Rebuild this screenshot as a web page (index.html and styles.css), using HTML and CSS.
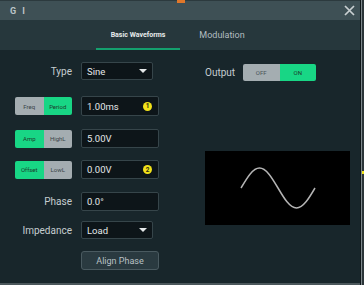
FILE: index.html
```html
<!DOCTYPE html>
<html>
<head>
<meta charset="utf-8">
<link rel="stylesheet" href="styles.css">
</head>
<body>
<div class="screen">
  <div class="dialog">
    <div class="titlebar">
      <span class="marker"></span>
      <span class="title">G I</span>
      <svg class="close" width="11" height="11" viewBox="0 0 11 11"><path d="M1 1L10 10M10 1L1 10" stroke="#c9d0d2" stroke-width="1.7" fill="none"/></svg>
    </div>
    <div class="tabs">
      <div class="tab active">Basic Waveforms</div>
      <div class="tab">Modulation</div>
    </div>
    <div class="content">
      <div class="left">
        <div class="row row-type">
          <span class="label">Type</span>
          <div class="select"><span>Sine</span><span class="caret"></span></div>
        </div>
        <div class="row row-freq">
          <div class="seg"><span class="seg-off">Freq</span><span class="seg-on">Period</span></div>
          <div class="input"><span>1.00ms</span><span class="badge">1</span></div>
        </div>
        <div class="row row-amp">
          <div class="seg"><span class="seg-on">Amp</span><span class="seg-off">HighL</span></div>
          <div class="input"><span>5.00V</span></div>
        </div>
        <div class="row row-offset">
          <div class="seg"><span class="seg-on">Offset</span><span class="seg-off">LowL</span></div>
          <div class="input"><span>0.00V</span><span class="badge">2</span></div>
        </div>
        <div class="row row-phase">
          <span class="label">Phase</span>
          <div class="input"><span>0.0°</span></div>
        </div>
        <div class="row row-imp">
          <span class="label">Impedance</span>
          <div class="select"><span>Load</span><span class="caret"></span></div>
        </div>
        <div class="row row-align">
          <span class="label"></span>
          <div class="button">Align Phase</div>
        </div>
      </div>
      <div class="right">
        <div class="output-row">
          <span class="out-label">Output</span>
          <div class="switch"><span class="sw-off">OFF</span><span class="sw-on">ON</span></div>
        </div>
        <div class="wave">
          <svg width="145" height="74" viewBox="0 0 145 74">
            <path d="M36 37 C42.03 26.75 47.8 17 54.5 17 C61.2 17 66.97 26.75 73 37 C79.03 47.25 84.8 57 91.5 57 C98.2 57 103.97 47.25 110 37" stroke="#b4b4b4" stroke-width="1.5" fill="none"/>
          </svg>
        </div>
      </div>
    </div>
    <div class="bottom-line"></div>
  </div>
  <div class="edge">
    <span class="edge-dark"></span>
    <span class="edge-line"></span>
    <span class="edge-rest"></span>
    <span class="edge-mark"></span>
  </div>
</div>
</body>
</html>
```

FILE: styles.css
```css
* { box-sizing: border-box; }
html, body {
  margin: 0;
  padding: 0;
  width: 364px;
  height: 285px;
  overflow: hidden;
  background: #1a262b;
  font-family: Roboto, "Liberation Sans", sans-serif;
}
.screen {
  display: flex;
  width: 364px;
  height: 285px;
}
.dialog {
  width: 360px;
  height: 285px;
  display: flex;
  flex-direction: column;
  background: #18262b;
}
.titlebar {
  position: relative;
  height: 20px;
  background: #3e5055;
  border-top: 1px solid #2c3a3e;
  display: flex;
  align-items: center;
  justify-content: space-between;
  padding: 0 5px 0 10px;
}
.marker {
  position: absolute;
  left: 177px;
  top: -1px;
  width: 8px;
  height: 3px;
  background: #e0772a;
}
.title {
  color: #bcc5c8;
  font-size: 9px;
  font-weight: 700;
  letter-spacing: 2px;
}
.close { display: block; }
.tabs {
  height: 30px;
  background: #26373c;
  display: flex;
  justify-content: center;
}
.tab {
  width: 84px;
  display: flex;
  align-items: center;
  justify-content: center;
  color: #b3bdc0;
  font-size: 9px;
  border-bottom: 2px solid transparent;
  padding-top: 2px;
}
.tab.active {
  color: #e6ebec;
  font-size: 7px;
  font-weight: 700;
  border-bottom-color: #14a06e;
}
.content {
  flex: 1;
  display: flex;
  padding-top: 12px;
}
.left {
  width: 159px;
  padding-left: 15px;
  display: flex;
  flex-direction: column;
}
.row {
  display: flex;
  align-items: center;
  gap: 9px;
  height: 19px;
}
.row-type { height: 18px; margin-bottom: 16px; }
.row-freq { height: 20px; margin-bottom: 13px; }
.row-amp { margin-bottom: 12px; }
.row-offset { margin-bottom: 13px; }
.row-phase { margin-bottom: 10px; }
.row-imp { height: 18px; margin-bottom: 12px; }
.label {
  width: 57px;
  text-align: right;
  color: #c5cdd0;
  font-size: 10px;
}
.select, .input {
  height: 100%;
  background: #0d1519;
  border: 1px solid #36454a;
  border-radius: 2px;
  display: flex;
  align-items: center;
  padding: 0 5px;
  color: #e4e8e9;
  font-size: 9.5px;
}
.select { width: 72px; justify-content: space-between; }
.input { width: 78px; justify-content: space-between; }
.caret {
  width: 0;
  height: 0;
  border-left: 4px solid transparent;
  border-right: 4px solid transparent;
  border-top: 4px solid #e4e8e9;
}
.badge {
  width: 9px;
  height: 9px;
  border-radius: 50%;
  background: #f2e21a;
  color: #2a2a10;
  font-size: 6.5px;
  font-weight: 700;
  display: flex;
  align-items: center;
  justify-content: center;
  margin-right: 1px;
}
.seg {
  width: 57px;
  height: 18px;
  display: flex;
  border-radius: 2px;
  overflow: hidden;
  font-size: 6px;
}
.seg span {
  flex: 1;
  display: flex;
  align-items: center;
  justify-content: center;
}
.seg-off { background: #a4adb1; color: #3a4448; }
.seg-on { background: #18d685; color: #1d3a2c; }
.button {
  width: 78px;
  height: 19px;
  background: #2a3a40;
  border: 1px solid #4a5a60;
  border-radius: 3px;
  color: #b9c2c5;
  font-size: 9px;
  display: flex;
  align-items: center;
  justify-content: center;
}
.right {
  margin-left: 46px;
  display: flex;
  flex-direction: column;
}
.output-row {
  display: flex;
  align-items: center;
  gap: 8px;
  height: 18px;
  margin-top: 1px;
}
.out-label {
  width: 30px;
  color: #c5cdd0;
  font-size: 10px;
}
.switch {
  width: 73px;
  height: 17px;
  display: flex;
  border-radius: 2px;
  overflow: hidden;
  font-size: 6px;
}
.switch span {
  flex: 1;
  display: flex;
  align-items: center;
  justify-content: center;
}
.sw-off { background: #a4adb1; color: #4a5458; }
.sw-on { background: #18d685; color: #1d3a2c; }
.wave {
  margin-top: 70px;
  width: 145px;
  height: 74px;
  background: #000;
}
.wave svg { display: block; }
.bottom-line {
  height: 2px;
  background: #4b575b;
}
.edge {
  position: relative;
  width: 4px;
  height: 285px;
  display: flex;
}
.edge-dark { width: 1px; background: #0f171a; }
.edge-line { width: 1px; background: #7f898d; }
.edge-rest { flex: 1; background: #2b3438; }
.edge-mark {
  position: absolute;
  left: 2px;
  top: 171px;
  width: 2px;
  height: 3px;
  background: #f0e41a;
}
```
